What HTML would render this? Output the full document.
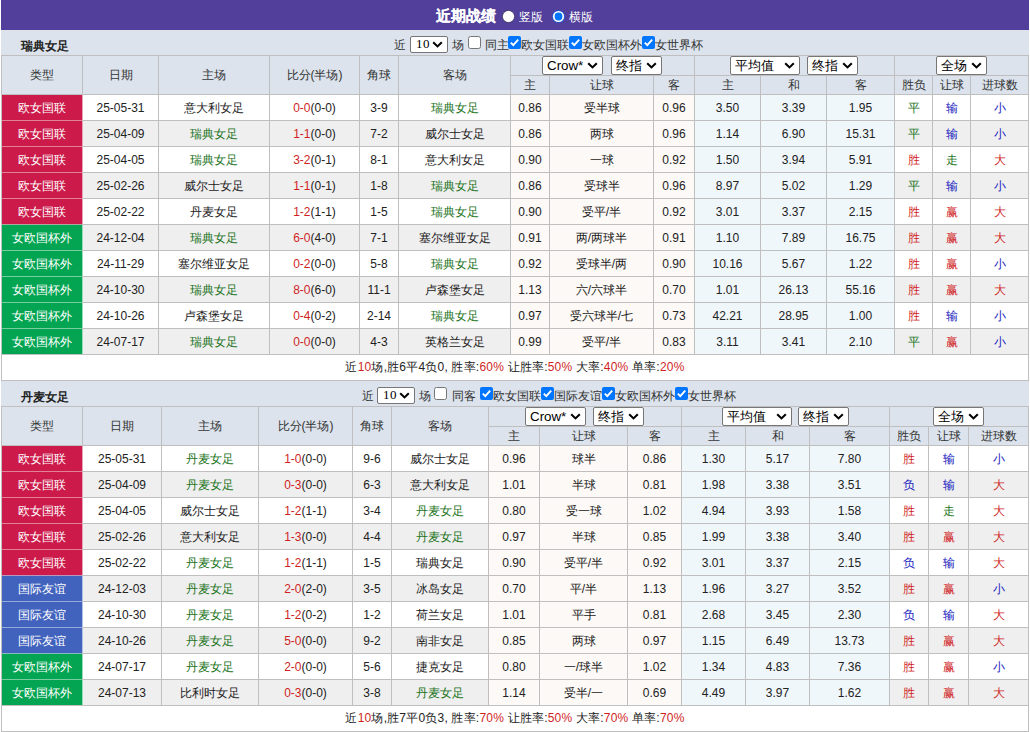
<!DOCTYPE html>
<html><head><meta charset="utf-8"><style>
html,body{margin:0;padding:0;background:#fff;width:1030px;height:732px;overflow:hidden}
body{position:relative;font-family:"Liberation Sans",sans-serif;font-size:12px;color:#333}
body>div{position:absolute;box-sizing:border-box}
.t{white-space:nowrap}
.c{text-align:center;white-space:nowrap;font-size:12px;color:#222;overflow:visible}
.h{color:#333}
.sel{background:#fff;border:1px solid #767676;border-radius:2px;box-sizing:content-box!important;color:#000;white-space:nowrap}
.sel .st{position:absolute;left:4px;top:0}
.sel .chev{position:absolute;right:4px;top:50%;margin-top:-4px}
</style></head><body>
<div style="left:1px;top:0px;width:1028px;height:30px;background:#523f9b"></div>
<div style="left:1px;top:30px;width:1028px;height:1px;background:#e6e6f8"></div>
<div class="t" style="left:436px;top:7px;font-size:15px;font-weight:bold;color:#fff;line-height:17px;-webkit-text-stroke:0.12px #fff">近期战绩</div>
<div style="left:501px;top:9px;width:15px;height:15px"><svg width="15" height="15" viewBox="0 0 15 15"><circle cx="7.5" cy="7.5" r="6.1" fill="#fff" stroke="#3c3560" stroke-width="0.9"/></svg></div>
<div class="t" style="left:519px;top:9px;font-size:12px;color:#fff;line-height:16px">竖版</div>
<div style="left:551px;top:9px;width:15px;height:15px"><svg width="15" height="15" viewBox="0 0 15 15"><circle cx="7.5" cy="7.5" r="6.6" fill="#2a55c8"/><circle cx="7.5" cy="7.5" r="5.6" fill="#fff"/><circle cx="7.5" cy="7.5" r="3.9" fill="#0075ff"/></svg></div>
<div class="t" style="left:569px;top:9px;font-size:12px;color:#fff;line-height:16px">横版</div>
<div style="left:1px;top:30px;width:1028px;height:25px;background:#dce3ec"></div>
<div class="t" style="left:21px;top:38px;font-size:12px;font-weight:bold;color:#222;line-height:16px">瑞典女足</div>
<div style="left:1px;top:55px;width:1028px;height:40px;background:#dce3ec"></div>
<div style="left:1px;top:95px;width:1028px;height:25px;background:#fff"></div>
<div style="left:1px;top:121px;width:1028px;height:25px;background:#efefef"></div>
<div style="left:1px;top:147px;width:1028px;height:25px;background:#fff"></div>
<div style="left:1px;top:173px;width:1028px;height:25px;background:#efefef"></div>
<div style="left:1px;top:199px;width:1028px;height:25px;background:#fff"></div>
<div style="left:1px;top:225px;width:1028px;height:25px;background:#efefef"></div>
<div style="left:1px;top:251px;width:1028px;height:25px;background:#fff"></div>
<div style="left:1px;top:277px;width:1028px;height:25px;background:#efefef"></div>
<div style="left:1px;top:303px;width:1028px;height:25px;background:#fff"></div>
<div style="left:1px;top:329px;width:1028px;height:25px;background:#efefef"></div>
<div style="left:1px;top:355px;width:1028px;height:25px;background:#fff"></div>
<div style="left:511px;top:95px;width:183px;height:25px;background:#fdf9f6"></div>
<div style="left:695px;top:95px;width:199px;height:25px;background:#f0f7fb"></div>
<div style="left:511px;top:121px;width:183px;height:25px;background:#fdf9f6"></div>
<div style="left:695px;top:121px;width:199px;height:25px;background:#f0f7fb"></div>
<div style="left:511px;top:147px;width:183px;height:25px;background:#fdf9f6"></div>
<div style="left:695px;top:147px;width:199px;height:25px;background:#f0f7fb"></div>
<div style="left:511px;top:173px;width:183px;height:25px;background:#fdf9f6"></div>
<div style="left:695px;top:173px;width:199px;height:25px;background:#f0f7fb"></div>
<div style="left:511px;top:199px;width:183px;height:25px;background:#fdf9f6"></div>
<div style="left:695px;top:199px;width:199px;height:25px;background:#f0f7fb"></div>
<div style="left:511px;top:225px;width:183px;height:25px;background:#fdf9f6"></div>
<div style="left:695px;top:225px;width:199px;height:25px;background:#f0f7fb"></div>
<div style="left:511px;top:251px;width:183px;height:25px;background:#fdf9f6"></div>
<div style="left:695px;top:251px;width:199px;height:25px;background:#f0f7fb"></div>
<div style="left:511px;top:277px;width:183px;height:25px;background:#fdf9f6"></div>
<div style="left:695px;top:277px;width:199px;height:25px;background:#f0f7fb"></div>
<div style="left:511px;top:303px;width:183px;height:25px;background:#fdf9f6"></div>
<div style="left:695px;top:303px;width:199px;height:25px;background:#f0f7fb"></div>
<div style="left:511px;top:329px;width:183px;height:25px;background:#fdf9f6"></div>
<div style="left:695px;top:329px;width:199px;height:25px;background:#f0f7fb"></div>
<div style="left:2px;top:95px;width:80px;height:25px;background:#cc1a4a"></div>
<div style="left:2px;top:121px;width:80px;height:25px;background:#cc1a4a"></div>
<div style="left:2px;top:147px;width:80px;height:25px;background:#cc1a4a"></div>
<div style="left:2px;top:173px;width:80px;height:25px;background:#cc1a4a"></div>
<div style="left:2px;top:199px;width:80px;height:25px;background:#cc1a4a"></div>
<div style="left:2px;top:225px;width:80px;height:25px;background:#04a552"></div>
<div style="left:2px;top:251px;width:80px;height:25px;background:#04a552"></div>
<div style="left:2px;top:277px;width:80px;height:25px;background:#04a552"></div>
<div style="left:2px;top:303px;width:80px;height:25px;background:#04a552"></div>
<div style="left:2px;top:329px;width:80px;height:25px;background:#04a552"></div>
<div style="left:1px;top:55px;width:1028px;height:1px;background:#bfbfbf"></div>
<div style="left:510px;top:75px;width:519px;height:1px;background:#bfbfbf"></div>
<div style="left:1px;top:94px;width:1028px;height:1px;background:#bfbfbf"></div>
<div style="left:1px;top:120px;width:1028px;height:1px;background:#bfbfbf"></div>
<div style="left:1px;top:146px;width:1028px;height:1px;background:#bfbfbf"></div>
<div style="left:1px;top:172px;width:1028px;height:1px;background:#bfbfbf"></div>
<div style="left:1px;top:198px;width:1028px;height:1px;background:#bfbfbf"></div>
<div style="left:1px;top:224px;width:1028px;height:1px;background:#bfbfbf"></div>
<div style="left:1px;top:250px;width:1028px;height:1px;background:#bfbfbf"></div>
<div style="left:1px;top:276px;width:1028px;height:1px;background:#bfbfbf"></div>
<div style="left:1px;top:302px;width:1028px;height:1px;background:#bfbfbf"></div>
<div style="left:1px;top:328px;width:1028px;height:1px;background:#bfbfbf"></div>
<div style="left:1px;top:354px;width:1028px;height:1px;background:#bfbfbf"></div>
<div style="left:1px;top:380px;width:1028px;height:1px;background:#bfbfbf"></div>
<div style="left:2px;top:120px;width:80px;height:1px;background:#e3819b"></div>
<div style="left:2px;top:146px;width:80px;height:1px;background:#e3819b"></div>
<div style="left:2px;top:172px;width:80px;height:1px;background:#e3819b"></div>
<div style="left:2px;top:198px;width:80px;height:1px;background:#e3819b"></div>
<div style="left:2px;top:224px;width:80px;height:1px;background:#aca89e"></div>
<div style="left:2px;top:250px;width:80px;height:1px;background:#75cea0"></div>
<div style="left:2px;top:276px;width:80px;height:1px;background:#75cea0"></div>
<div style="left:2px;top:302px;width:80px;height:1px;background:#75cea0"></div>
<div style="left:2px;top:328px;width:80px;height:1px;background:#75cea0"></div>
<div style="left:1px;top:55px;width:1px;height:326px;background:#bfbfbf"></div>
<div style="left:1028px;top:55px;width:1px;height:326px;background:#bfbfbf"></div>
<div style="left:82px;top:55px;width:1px;height:300px;background:#bfbfbf"></div>
<div style="left:158px;top:55px;width:1px;height:300px;background:#bfbfbf"></div>
<div style="left:269px;top:55px;width:1px;height:300px;background:#bfbfbf"></div>
<div style="left:359px;top:55px;width:1px;height:300px;background:#bfbfbf"></div>
<div style="left:398px;top:55px;width:1px;height:300px;background:#bfbfbf"></div>
<div style="left:510px;top:55px;width:1px;height:300px;background:#bfbfbf"></div>
<div style="left:694px;top:55px;width:1px;height:300px;background:#bfbfbf"></div>
<div style="left:894px;top:55px;width:1px;height:300px;background:#bfbfbf"></div>
<div style="left:549px;top:75px;width:1px;height:280px;background:#bfbfbf"></div>
<div style="left:653px;top:75px;width:1px;height:280px;background:#bfbfbf"></div>
<div style="left:760px;top:75px;width:1px;height:280px;background:#bfbfbf"></div>
<div style="left:826px;top:75px;width:1px;height:280px;background:#bfbfbf"></div>
<div style="left:932px;top:75px;width:1px;height:280px;background:#bfbfbf"></div>
<div style="left:970px;top:75px;width:1px;height:280px;background:#bfbfbf"></div>
<div style="left:82px;top:95px;width:1px;height:25px;background:#eba3b7"></div>
<div style="left:82px;top:121px;width:1px;height:25px;background:#eba3b7"></div>
<div style="left:82px;top:147px;width:1px;height:25px;background:#eba3b7"></div>
<div style="left:82px;top:173px;width:1px;height:25px;background:#eba3b7"></div>
<div style="left:82px;top:199px;width:1px;height:25px;background:#eba3b7"></div>
<div style="left:82px;top:225px;width:1px;height:25px;background:#9bdbba"></div>
<div style="left:82px;top:251px;width:1px;height:25px;background:#9bdbba"></div>
<div style="left:82px;top:277px;width:1px;height:25px;background:#9bdbba"></div>
<div style="left:82px;top:303px;width:1px;height:25px;background:#9bdbba"></div>
<div style="left:82px;top:329px;width:1px;height:25px;background:#9bdbba"></div>
<div class="c h" style="left:2px;top:56px;width:80px;height:38px;line-height:38px">类型</div>
<div class="c h" style="left:83px;top:56px;width:75px;height:38px;line-height:38px">日期</div>
<div class="c h" style="left:159px;top:56px;width:110px;height:38px;line-height:38px">主场</div>
<div class="c h" style="left:270px;top:56px;width:89px;height:38px;line-height:38px">比分(半场)</div>
<div class="c h" style="left:360px;top:56px;width:38px;height:38px;line-height:38px">角球</div>
<div class="c h" style="left:399px;top:56px;width:111px;height:38px;line-height:38px">客场</div>
<div class="c h" style="left:511px;top:76px;width:38px;height:18px;line-height:18px">主</div>
<div class="c h" style="left:550px;top:76px;width:103px;height:18px;line-height:18px">让球</div>
<div class="c h" style="left:654px;top:76px;width:40px;height:18px;line-height:18px">客</div>
<div class="c h" style="left:695px;top:76px;width:65px;height:18px;line-height:18px">主</div>
<div class="c h" style="left:761px;top:76px;width:65px;height:18px;line-height:18px">和</div>
<div class="c h" style="left:827px;top:76px;width:67px;height:18px;line-height:18px">客</div>
<div class="c h" style="left:895px;top:76px;width:37px;height:18px;line-height:18px">胜负</div>
<div class="c h" style="left:933px;top:76px;width:37px;height:18px;line-height:18px">让球</div>
<div class="c h" style="left:971px;top:76px;width:57px;height:18px;line-height:18px">进球数</div>
<div class="sel" style="left:542px;top:56px;width:59px;height:17px;font-size:13.333px;line-height:17px"><span class="st">Crow*</span><svg class="chev" width="11" height="7" viewBox="0 0 11 7"><path d="M1.2 1.3 L5.5 5.4 L9.8 1.3" fill="none" stroke="#000" stroke-width="2.1"/></svg></div>
<div class="sel" style="left:611px;top:56px;width:49px;height:17px;font-size:13.333px;line-height:17px"><span class="st">终指</span><svg class="chev" width="11" height="7" viewBox="0 0 11 7"><path d="M1.2 1.3 L5.5 5.4 L9.8 1.3" fill="none" stroke="#000" stroke-width="2.1"/></svg></div>
<div class="sel" style="left:730px;top:56px;width:68px;height:17px;font-size:13.333px;line-height:17px"><span class="st">平均值</span><svg class="chev" width="11" height="7" viewBox="0 0 11 7"><path d="M1.2 1.3 L5.5 5.4 L9.8 1.3" fill="none" stroke="#000" stroke-width="2.1"/></svg></div>
<div class="sel" style="left:807px;top:56px;width:49px;height:17px;font-size:13.333px;line-height:17px"><span class="st">终指</span><svg class="chev" width="11" height="7" viewBox="0 0 11 7"><path d="M1.2 1.3 L5.5 5.4 L9.8 1.3" fill="none" stroke="#000" stroke-width="2.1"/></svg></div>
<div class="sel" style="left:936px;top:56px;width:49px;height:17px;font-size:13.333px;line-height:17px"><span class="st">全场</span><svg class="chev" width="11" height="7" viewBox="0 0 11 7"><path d="M1.2 1.3 L5.5 5.4 L9.8 1.3" fill="none" stroke="#000" stroke-width="2.1"/></svg></div>
<div class="c" style="left:2px;top:96px;width:80px;height:25px;line-height:25px"><span style="color:#fff">欧女国联</span></div>
<div class="c" style="left:83px;top:96px;width:75px;height:25px;line-height:25px">25-05-31</div>
<div class="c" style="left:159px;top:96px;width:110px;height:25px;line-height:25px">意大利女足</div>
<div class="c" style="left:270px;top:96px;width:89px;height:25px;line-height:25px"><span style="color:#cf1f1f">0-0</span>(0-0)</div>
<div class="c" style="left:360px;top:96px;width:38px;height:25px;line-height:25px">3-9</div>
<div class="c" style="left:399px;top:96px;width:111px;height:25px;line-height:25px"><span style="color:#1c741c">瑞典女足</span></div>
<div class="c" style="left:511px;top:96px;width:38px;height:25px;line-height:25px">0.86</div>
<div class="c" style="left:550px;top:96px;width:103px;height:25px;line-height:25px">受半球</div>
<div class="c" style="left:654px;top:96px;width:40px;height:25px;line-height:25px">0.96</div>
<div class="c" style="left:695px;top:96px;width:65px;height:25px;line-height:25px">3.50</div>
<div class="c" style="left:761px;top:96px;width:65px;height:25px;line-height:25px">3.39</div>
<div class="c" style="left:827px;top:96px;width:67px;height:25px;line-height:25px">1.95</div>
<div class="c" style="left:895px;top:96px;width:37px;height:25px;line-height:25px"><span style="color:#1c741c">平</span></div>
<div class="c" style="left:933px;top:96px;width:37px;height:25px;line-height:25px"><span style="color:#1822c0">输</span></div>
<div class="c" style="left:971px;top:96px;width:57px;height:25px;line-height:25px"><span style="color:#1822c0">小</span></div>
<div class="c" style="left:2px;top:122px;width:80px;height:25px;line-height:25px"><span style="color:#fff">欧女国联</span></div>
<div class="c" style="left:83px;top:122px;width:75px;height:25px;line-height:25px">25-04-09</div>
<div class="c" style="left:159px;top:122px;width:110px;height:25px;line-height:25px"><span style="color:#1c741c">瑞典女足</span></div>
<div class="c" style="left:270px;top:122px;width:89px;height:25px;line-height:25px"><span style="color:#cf1f1f">1-1</span>(0-0)</div>
<div class="c" style="left:360px;top:122px;width:38px;height:25px;line-height:25px">7-2</div>
<div class="c" style="left:399px;top:122px;width:111px;height:25px;line-height:25px">威尔士女足</div>
<div class="c" style="left:511px;top:122px;width:38px;height:25px;line-height:25px">0.86</div>
<div class="c" style="left:550px;top:122px;width:103px;height:25px;line-height:25px">两球</div>
<div class="c" style="left:654px;top:122px;width:40px;height:25px;line-height:25px">0.96</div>
<div class="c" style="left:695px;top:122px;width:65px;height:25px;line-height:25px">1.14</div>
<div class="c" style="left:761px;top:122px;width:65px;height:25px;line-height:25px">6.90</div>
<div class="c" style="left:827px;top:122px;width:67px;height:25px;line-height:25px">15.31</div>
<div class="c" style="left:895px;top:122px;width:37px;height:25px;line-height:25px"><span style="color:#1c741c">平</span></div>
<div class="c" style="left:933px;top:122px;width:37px;height:25px;line-height:25px"><span style="color:#1822c0">输</span></div>
<div class="c" style="left:971px;top:122px;width:57px;height:25px;line-height:25px"><span style="color:#1822c0">小</span></div>
<div class="c" style="left:2px;top:148px;width:80px;height:25px;line-height:25px"><span style="color:#fff">欧女国联</span></div>
<div class="c" style="left:83px;top:148px;width:75px;height:25px;line-height:25px">25-04-05</div>
<div class="c" style="left:159px;top:148px;width:110px;height:25px;line-height:25px"><span style="color:#1c741c">瑞典女足</span></div>
<div class="c" style="left:270px;top:148px;width:89px;height:25px;line-height:25px"><span style="color:#cf1f1f">3-2</span>(0-1)</div>
<div class="c" style="left:360px;top:148px;width:38px;height:25px;line-height:25px">8-1</div>
<div class="c" style="left:399px;top:148px;width:111px;height:25px;line-height:25px">意大利女足</div>
<div class="c" style="left:511px;top:148px;width:38px;height:25px;line-height:25px">0.90</div>
<div class="c" style="left:550px;top:148px;width:103px;height:25px;line-height:25px">一球</div>
<div class="c" style="left:654px;top:148px;width:40px;height:25px;line-height:25px">0.92</div>
<div class="c" style="left:695px;top:148px;width:65px;height:25px;line-height:25px">1.50</div>
<div class="c" style="left:761px;top:148px;width:65px;height:25px;line-height:25px">3.94</div>
<div class="c" style="left:827px;top:148px;width:67px;height:25px;line-height:25px">5.91</div>
<div class="c" style="left:895px;top:148px;width:37px;height:25px;line-height:25px"><span style="color:#cf1f1f">胜</span></div>
<div class="c" style="left:933px;top:148px;width:37px;height:25px;line-height:25px"><span style="color:#1c741c">走</span></div>
<div class="c" style="left:971px;top:148px;width:57px;height:25px;line-height:25px"><span style="color:#cf1f1f">大</span></div>
<div class="c" style="left:2px;top:174px;width:80px;height:25px;line-height:25px"><span style="color:#fff">欧女国联</span></div>
<div class="c" style="left:83px;top:174px;width:75px;height:25px;line-height:25px">25-02-26</div>
<div class="c" style="left:159px;top:174px;width:110px;height:25px;line-height:25px">威尔士女足</div>
<div class="c" style="left:270px;top:174px;width:89px;height:25px;line-height:25px"><span style="color:#cf1f1f">1-1</span>(0-1)</div>
<div class="c" style="left:360px;top:174px;width:38px;height:25px;line-height:25px">1-8</div>
<div class="c" style="left:399px;top:174px;width:111px;height:25px;line-height:25px"><span style="color:#1c741c">瑞典女足</span></div>
<div class="c" style="left:511px;top:174px;width:38px;height:25px;line-height:25px">0.86</div>
<div class="c" style="left:550px;top:174px;width:103px;height:25px;line-height:25px">受球半</div>
<div class="c" style="left:654px;top:174px;width:40px;height:25px;line-height:25px">0.96</div>
<div class="c" style="left:695px;top:174px;width:65px;height:25px;line-height:25px">8.97</div>
<div class="c" style="left:761px;top:174px;width:65px;height:25px;line-height:25px">5.02</div>
<div class="c" style="left:827px;top:174px;width:67px;height:25px;line-height:25px">1.29</div>
<div class="c" style="left:895px;top:174px;width:37px;height:25px;line-height:25px"><span style="color:#1c741c">平</span></div>
<div class="c" style="left:933px;top:174px;width:37px;height:25px;line-height:25px"><span style="color:#1822c0">输</span></div>
<div class="c" style="left:971px;top:174px;width:57px;height:25px;line-height:25px"><span style="color:#1822c0">小</span></div>
<div class="c" style="left:2px;top:200px;width:80px;height:25px;line-height:25px"><span style="color:#fff">欧女国联</span></div>
<div class="c" style="left:83px;top:200px;width:75px;height:25px;line-height:25px">25-02-22</div>
<div class="c" style="left:159px;top:200px;width:110px;height:25px;line-height:25px">丹麦女足</div>
<div class="c" style="left:270px;top:200px;width:89px;height:25px;line-height:25px"><span style="color:#cf1f1f">1-2</span>(1-1)</div>
<div class="c" style="left:360px;top:200px;width:38px;height:25px;line-height:25px">1-5</div>
<div class="c" style="left:399px;top:200px;width:111px;height:25px;line-height:25px"><span style="color:#1c741c">瑞典女足</span></div>
<div class="c" style="left:511px;top:200px;width:38px;height:25px;line-height:25px">0.90</div>
<div class="c" style="left:550px;top:200px;width:103px;height:25px;line-height:25px">受平/半</div>
<div class="c" style="left:654px;top:200px;width:40px;height:25px;line-height:25px">0.92</div>
<div class="c" style="left:695px;top:200px;width:65px;height:25px;line-height:25px">3.01</div>
<div class="c" style="left:761px;top:200px;width:65px;height:25px;line-height:25px">3.37</div>
<div class="c" style="left:827px;top:200px;width:67px;height:25px;line-height:25px">2.15</div>
<div class="c" style="left:895px;top:200px;width:37px;height:25px;line-height:25px"><span style="color:#cf1f1f">胜</span></div>
<div class="c" style="left:933px;top:200px;width:37px;height:25px;line-height:25px"><span style="color:#cf1f1f">赢</span></div>
<div class="c" style="left:971px;top:200px;width:57px;height:25px;line-height:25px"><span style="color:#cf1f1f">大</span></div>
<div class="c" style="left:2px;top:226px;width:80px;height:25px;line-height:25px"><span style="color:#fff">女欧国杯外</span></div>
<div class="c" style="left:83px;top:226px;width:75px;height:25px;line-height:25px">24-12-04</div>
<div class="c" style="left:159px;top:226px;width:110px;height:25px;line-height:25px"><span style="color:#1c741c">瑞典女足</span></div>
<div class="c" style="left:270px;top:226px;width:89px;height:25px;line-height:25px"><span style="color:#cf1f1f">6-0</span>(4-0)</div>
<div class="c" style="left:360px;top:226px;width:38px;height:25px;line-height:25px">7-1</div>
<div class="c" style="left:399px;top:226px;width:111px;height:25px;line-height:25px">塞尔维亚女足</div>
<div class="c" style="left:511px;top:226px;width:38px;height:25px;line-height:25px">0.91</div>
<div class="c" style="left:550px;top:226px;width:103px;height:25px;line-height:25px">两/两球半</div>
<div class="c" style="left:654px;top:226px;width:40px;height:25px;line-height:25px">0.91</div>
<div class="c" style="left:695px;top:226px;width:65px;height:25px;line-height:25px">1.10</div>
<div class="c" style="left:761px;top:226px;width:65px;height:25px;line-height:25px">7.89</div>
<div class="c" style="left:827px;top:226px;width:67px;height:25px;line-height:25px">16.75</div>
<div class="c" style="left:895px;top:226px;width:37px;height:25px;line-height:25px"><span style="color:#cf1f1f">胜</span></div>
<div class="c" style="left:933px;top:226px;width:37px;height:25px;line-height:25px"><span style="color:#cf1f1f">赢</span></div>
<div class="c" style="left:971px;top:226px;width:57px;height:25px;line-height:25px"><span style="color:#cf1f1f">大</span></div>
<div class="c" style="left:2px;top:252px;width:80px;height:25px;line-height:25px"><span style="color:#fff">女欧国杯外</span></div>
<div class="c" style="left:83px;top:252px;width:75px;height:25px;line-height:25px">24-11-29</div>
<div class="c" style="left:159px;top:252px;width:110px;height:25px;line-height:25px">塞尔维亚女足</div>
<div class="c" style="left:270px;top:252px;width:89px;height:25px;line-height:25px"><span style="color:#cf1f1f">0-2</span>(0-0)</div>
<div class="c" style="left:360px;top:252px;width:38px;height:25px;line-height:25px">5-8</div>
<div class="c" style="left:399px;top:252px;width:111px;height:25px;line-height:25px"><span style="color:#1c741c">瑞典女足</span></div>
<div class="c" style="left:511px;top:252px;width:38px;height:25px;line-height:25px">0.92</div>
<div class="c" style="left:550px;top:252px;width:103px;height:25px;line-height:25px">受球半/两</div>
<div class="c" style="left:654px;top:252px;width:40px;height:25px;line-height:25px">0.90</div>
<div class="c" style="left:695px;top:252px;width:65px;height:25px;line-height:25px">10.16</div>
<div class="c" style="left:761px;top:252px;width:65px;height:25px;line-height:25px">5.67</div>
<div class="c" style="left:827px;top:252px;width:67px;height:25px;line-height:25px">1.22</div>
<div class="c" style="left:895px;top:252px;width:37px;height:25px;line-height:25px"><span style="color:#cf1f1f">胜</span></div>
<div class="c" style="left:933px;top:252px;width:37px;height:25px;line-height:25px"><span style="color:#cf1f1f">赢</span></div>
<div class="c" style="left:971px;top:252px;width:57px;height:25px;line-height:25px"><span style="color:#1822c0">小</span></div>
<div class="c" style="left:2px;top:278px;width:80px;height:25px;line-height:25px"><span style="color:#fff">女欧国杯外</span></div>
<div class="c" style="left:83px;top:278px;width:75px;height:25px;line-height:25px">24-10-30</div>
<div class="c" style="left:159px;top:278px;width:110px;height:25px;line-height:25px"><span style="color:#1c741c">瑞典女足</span></div>
<div class="c" style="left:270px;top:278px;width:89px;height:25px;line-height:25px"><span style="color:#cf1f1f">8-0</span>(6-0)</div>
<div class="c" style="left:360px;top:278px;width:38px;height:25px;line-height:25px">11-1</div>
<div class="c" style="left:399px;top:278px;width:111px;height:25px;line-height:25px">卢森堡女足</div>
<div class="c" style="left:511px;top:278px;width:38px;height:25px;line-height:25px">1.13</div>
<div class="c" style="left:550px;top:278px;width:103px;height:25px;line-height:25px">六/六球半</div>
<div class="c" style="left:654px;top:278px;width:40px;height:25px;line-height:25px">0.70</div>
<div class="c" style="left:695px;top:278px;width:65px;height:25px;line-height:25px">1.01</div>
<div class="c" style="left:761px;top:278px;width:65px;height:25px;line-height:25px">26.13</div>
<div class="c" style="left:827px;top:278px;width:67px;height:25px;line-height:25px">55.16</div>
<div class="c" style="left:895px;top:278px;width:37px;height:25px;line-height:25px"><span style="color:#cf1f1f">胜</span></div>
<div class="c" style="left:933px;top:278px;width:37px;height:25px;line-height:25px"><span style="color:#cf1f1f">赢</span></div>
<div class="c" style="left:971px;top:278px;width:57px;height:25px;line-height:25px"><span style="color:#cf1f1f">大</span></div>
<div class="c" style="left:2px;top:304px;width:80px;height:25px;line-height:25px"><span style="color:#fff">女欧国杯外</span></div>
<div class="c" style="left:83px;top:304px;width:75px;height:25px;line-height:25px">24-10-26</div>
<div class="c" style="left:159px;top:304px;width:110px;height:25px;line-height:25px">卢森堡女足</div>
<div class="c" style="left:270px;top:304px;width:89px;height:25px;line-height:25px"><span style="color:#cf1f1f">0-4</span>(0-2)</div>
<div class="c" style="left:360px;top:304px;width:38px;height:25px;line-height:25px">2-14</div>
<div class="c" style="left:399px;top:304px;width:111px;height:25px;line-height:25px"><span style="color:#1c741c">瑞典女足</span></div>
<div class="c" style="left:511px;top:304px;width:38px;height:25px;line-height:25px">0.97</div>
<div class="c" style="left:550px;top:304px;width:103px;height:25px;line-height:25px">受六球半/七</div>
<div class="c" style="left:654px;top:304px;width:40px;height:25px;line-height:25px">0.73</div>
<div class="c" style="left:695px;top:304px;width:65px;height:25px;line-height:25px">42.21</div>
<div class="c" style="left:761px;top:304px;width:65px;height:25px;line-height:25px">28.95</div>
<div class="c" style="left:827px;top:304px;width:67px;height:25px;line-height:25px">1.00</div>
<div class="c" style="left:895px;top:304px;width:37px;height:25px;line-height:25px"><span style="color:#cf1f1f">胜</span></div>
<div class="c" style="left:933px;top:304px;width:37px;height:25px;line-height:25px"><span style="color:#1822c0">输</span></div>
<div class="c" style="left:971px;top:304px;width:57px;height:25px;line-height:25px"><span style="color:#1822c0">小</span></div>
<div class="c" style="left:2px;top:330px;width:80px;height:25px;line-height:25px"><span style="color:#fff">女欧国杯外</span></div>
<div class="c" style="left:83px;top:330px;width:75px;height:25px;line-height:25px">24-07-17</div>
<div class="c" style="left:159px;top:330px;width:110px;height:25px;line-height:25px"><span style="color:#1c741c">瑞典女足</span></div>
<div class="c" style="left:270px;top:330px;width:89px;height:25px;line-height:25px"><span style="color:#cf1f1f">0-0</span>(0-0)</div>
<div class="c" style="left:360px;top:330px;width:38px;height:25px;line-height:25px">4-3</div>
<div class="c" style="left:399px;top:330px;width:111px;height:25px;line-height:25px">英格兰女足</div>
<div class="c" style="left:511px;top:330px;width:38px;height:25px;line-height:25px">0.99</div>
<div class="c" style="left:550px;top:330px;width:103px;height:25px;line-height:25px">受平/半</div>
<div class="c" style="left:654px;top:330px;width:40px;height:25px;line-height:25px">0.83</div>
<div class="c" style="left:695px;top:330px;width:65px;height:25px;line-height:25px">3.11</div>
<div class="c" style="left:761px;top:330px;width:65px;height:25px;line-height:25px">3.41</div>
<div class="c" style="left:827px;top:330px;width:67px;height:25px;line-height:25px">2.10</div>
<div class="c" style="left:895px;top:330px;width:37px;height:25px;line-height:25px"><span style="color:#1c741c">平</span></div>
<div class="c" style="left:933px;top:330px;width:37px;height:25px;line-height:25px"><span style="color:#cf1f1f">赢</span></div>
<div class="c" style="left:971px;top:330px;width:57px;height:25px;line-height:25px"><span style="color:#1822c0">小</span></div>
<div class="c" style="left:2px;top:355px;width:1026px;height:25px;line-height:25px;letter-spacing:0.2px">近<span style="color:#cf1f1f">10</span>场,胜6平4负0, 胜率:<span style="color:#cf1f1f">60%</span> 让胜率:<span style="color:#cf1f1f">50%</span> 大率:<span style="color:#cf1f1f">40%</span> 单率:<span style="color:#cf1f1f">20%</span></div>
<div class="t" style="left:394px;top:37px;font-size:12px;color:#333;line-height:16px">近</div>
<div class="sel r" style="left:410px;top:36px;width:36px;height:15px;font-size:13.333px;line-height:15px"><span class="st" style="font-family:Liberation Serif,serif;font-size:13px;left:5px;top:-1px;letter-spacing:0.5px">10</span><svg class="chev" width="11" height="7" viewBox="0 0 11 7"><path d="M1.2 1.3 L5.5 5.4 L9.8 1.3" fill="none" stroke="#000" stroke-width="2.1"/></svg></div>
<div class="t" style="left:452px;top:37px;font-size:12px;color:#333;line-height:16px">场</div>
<div style="left:468px;top:36px;width:13px;height:13px"><svg width="13" height="13" viewBox="0 0 13 13"><rect x="0.5" y="0.5" width="12" height="12" rx="2" fill="#fff" stroke="#767676" stroke-width="1"/></svg></div>
<div class="t" style="left:485px;top:37px;font-size:12px;color:#333;line-height:16px">同主</div>
<div style="left:508px;top:36px;width:13px;height:13px"><svg width="13" height="13" viewBox="0 0 13 13"><rect x="0" y="0" width="13" height="13" rx="2" fill="#0075ff"/><path d="M2.8 6.6 L5.3 9.1 L10.2 3.6" fill="none" stroke="#fff" stroke-width="1.9"/></svg></div>
<div class="t" style="left:521px;top:37px;font-size:12px;color:#333;line-height:16px">欧女国联</div>
<div style="left:569px;top:36px;width:13px;height:13px"><svg width="13" height="13" viewBox="0 0 13 13"><rect x="0" y="0" width="13" height="13" rx="2" fill="#0075ff"/><path d="M2.8 6.6 L5.3 9.1 L10.2 3.6" fill="none" stroke="#fff" stroke-width="1.9"/></svg></div>
<div class="t" style="left:582px;top:37px;font-size:12px;color:#333;line-height:16px">女欧国杯外</div>
<div style="left:642px;top:36px;width:13px;height:13px"><svg width="13" height="13" viewBox="0 0 13 13"><rect x="0" y="0" width="13" height="13" rx="2" fill="#0075ff"/><path d="M2.8 6.6 L5.3 9.1 L10.2 3.6" fill="none" stroke="#fff" stroke-width="1.9"/></svg></div>
<div class="t" style="left:655px;top:37px;font-size:12px;color:#333;line-height:16px">女世界杯</div>
<div style="left:1px;top:381px;width:1028px;height:25px;background:#dce3ec"></div>
<div class="t" style="left:21px;top:389px;font-size:12px;font-weight:bold;color:#222;line-height:16px">丹麦女足</div>
<div style="left:1px;top:406px;width:1028px;height:40px;background:#dce3ec"></div>
<div style="left:1px;top:446px;width:1028px;height:25px;background:#fff"></div>
<div style="left:1px;top:472px;width:1028px;height:25px;background:#efefef"></div>
<div style="left:1px;top:498px;width:1028px;height:25px;background:#fff"></div>
<div style="left:1px;top:524px;width:1028px;height:25px;background:#efefef"></div>
<div style="left:1px;top:550px;width:1028px;height:25px;background:#fff"></div>
<div style="left:1px;top:576px;width:1028px;height:25px;background:#efefef"></div>
<div style="left:1px;top:602px;width:1028px;height:25px;background:#fff"></div>
<div style="left:1px;top:628px;width:1028px;height:25px;background:#efefef"></div>
<div style="left:1px;top:654px;width:1028px;height:25px;background:#fff"></div>
<div style="left:1px;top:680px;width:1028px;height:25px;background:#efefef"></div>
<div style="left:1px;top:706px;width:1028px;height:25px;background:#fff"></div>
<div style="left:489px;top:446px;width:192px;height:25px;background:#fdf9f6"></div>
<div style="left:682px;top:446px;width:207px;height:25px;background:#f0f7fb"></div>
<div style="left:489px;top:472px;width:192px;height:25px;background:#fdf9f6"></div>
<div style="left:682px;top:472px;width:207px;height:25px;background:#f0f7fb"></div>
<div style="left:489px;top:498px;width:192px;height:25px;background:#fdf9f6"></div>
<div style="left:682px;top:498px;width:207px;height:25px;background:#f0f7fb"></div>
<div style="left:489px;top:524px;width:192px;height:25px;background:#fdf9f6"></div>
<div style="left:682px;top:524px;width:207px;height:25px;background:#f0f7fb"></div>
<div style="left:489px;top:550px;width:192px;height:25px;background:#fdf9f6"></div>
<div style="left:682px;top:550px;width:207px;height:25px;background:#f0f7fb"></div>
<div style="left:489px;top:576px;width:192px;height:25px;background:#fdf9f6"></div>
<div style="left:682px;top:576px;width:207px;height:25px;background:#f0f7fb"></div>
<div style="left:489px;top:602px;width:192px;height:25px;background:#fdf9f6"></div>
<div style="left:682px;top:602px;width:207px;height:25px;background:#f0f7fb"></div>
<div style="left:489px;top:628px;width:192px;height:25px;background:#fdf9f6"></div>
<div style="left:682px;top:628px;width:207px;height:25px;background:#f0f7fb"></div>
<div style="left:489px;top:654px;width:192px;height:25px;background:#fdf9f6"></div>
<div style="left:682px;top:654px;width:207px;height:25px;background:#f0f7fb"></div>
<div style="left:489px;top:680px;width:192px;height:25px;background:#fdf9f6"></div>
<div style="left:682px;top:680px;width:207px;height:25px;background:#f0f7fb"></div>
<div style="left:2px;top:446px;width:80px;height:25px;background:#cc1a4a"></div>
<div style="left:2px;top:472px;width:80px;height:25px;background:#cc1a4a"></div>
<div style="left:2px;top:498px;width:80px;height:25px;background:#cc1a4a"></div>
<div style="left:2px;top:524px;width:80px;height:25px;background:#cc1a4a"></div>
<div style="left:2px;top:550px;width:80px;height:25px;background:#cc1a4a"></div>
<div style="left:2px;top:576px;width:80px;height:25px;background:#4163bd"></div>
<div style="left:2px;top:602px;width:80px;height:25px;background:#4163bd"></div>
<div style="left:2px;top:628px;width:80px;height:25px;background:#4163bd"></div>
<div style="left:2px;top:654px;width:80px;height:25px;background:#04a552"></div>
<div style="left:2px;top:680px;width:80px;height:25px;background:#04a552"></div>
<div style="left:1px;top:406px;width:1028px;height:1px;background:#bfbfbf"></div>
<div style="left:488px;top:426px;width:541px;height:1px;background:#bfbfbf"></div>
<div style="left:1px;top:445px;width:1028px;height:1px;background:#bfbfbf"></div>
<div style="left:1px;top:471px;width:1028px;height:1px;background:#bfbfbf"></div>
<div style="left:1px;top:497px;width:1028px;height:1px;background:#bfbfbf"></div>
<div style="left:1px;top:523px;width:1028px;height:1px;background:#bfbfbf"></div>
<div style="left:1px;top:549px;width:1028px;height:1px;background:#bfbfbf"></div>
<div style="left:1px;top:575px;width:1028px;height:1px;background:#bfbfbf"></div>
<div style="left:1px;top:601px;width:1028px;height:1px;background:#bfbfbf"></div>
<div style="left:1px;top:627px;width:1028px;height:1px;background:#bfbfbf"></div>
<div style="left:1px;top:653px;width:1028px;height:1px;background:#bfbfbf"></div>
<div style="left:1px;top:679px;width:1028px;height:1px;background:#bfbfbf"></div>
<div style="left:1px;top:705px;width:1028px;height:1px;background:#bfbfbf"></div>
<div style="left:1px;top:731px;width:1028px;height:1px;background:#bfbfbf"></div>
<div style="left:2px;top:471px;width:80px;height:1px;background:#e3819b"></div>
<div style="left:2px;top:497px;width:80px;height:1px;background:#e3819b"></div>
<div style="left:2px;top:523px;width:80px;height:1px;background:#e3819b"></div>
<div style="left:2px;top:549px;width:80px;height:1px;background:#e3819b"></div>
<div style="left:2px;top:575px;width:80px;height:1px;background:#bc95bb"></div>
<div style="left:2px;top:601px;width:80px;height:1px;background:#96a9db"></div>
<div style="left:2px;top:627px;width:80px;height:1px;background:#96a9db"></div>
<div style="left:2px;top:653px;width:80px;height:1px;background:#85bbbe"></div>
<div style="left:2px;top:679px;width:80px;height:1px;background:#75cea0"></div>
<div style="left:1px;top:406px;width:1px;height:326px;background:#bfbfbf"></div>
<div style="left:1028px;top:406px;width:1px;height:326px;background:#bfbfbf"></div>
<div style="left:82px;top:406px;width:1px;height:300px;background:#bfbfbf"></div>
<div style="left:161px;top:406px;width:1px;height:300px;background:#bfbfbf"></div>
<div style="left:258px;top:406px;width:1px;height:300px;background:#bfbfbf"></div>
<div style="left:352px;top:406px;width:1px;height:300px;background:#bfbfbf"></div>
<div style="left:391px;top:406px;width:1px;height:300px;background:#bfbfbf"></div>
<div style="left:488px;top:406px;width:1px;height:300px;background:#bfbfbf"></div>
<div style="left:681px;top:406px;width:1px;height:300px;background:#bfbfbf"></div>
<div style="left:889px;top:406px;width:1px;height:300px;background:#bfbfbf"></div>
<div style="left:539px;top:426px;width:1px;height:280px;background:#bfbfbf"></div>
<div style="left:627px;top:426px;width:1px;height:280px;background:#bfbfbf"></div>
<div style="left:745px;top:426px;width:1px;height:280px;background:#bfbfbf"></div>
<div style="left:809px;top:426px;width:1px;height:280px;background:#bfbfbf"></div>
<div style="left:928px;top:426px;width:1px;height:280px;background:#bfbfbf"></div>
<div style="left:968px;top:426px;width:1px;height:280px;background:#bfbfbf"></div>
<div style="left:82px;top:446px;width:1px;height:25px;background:#eba3b7"></div>
<div style="left:82px;top:472px;width:1px;height:25px;background:#eba3b7"></div>
<div style="left:82px;top:498px;width:1px;height:25px;background:#eba3b7"></div>
<div style="left:82px;top:524px;width:1px;height:25px;background:#eba3b7"></div>
<div style="left:82px;top:550px;width:1px;height:25px;background:#eba3b7"></div>
<div style="left:82px;top:576px;width:1px;height:25px;background:#b3c1e5"></div>
<div style="left:82px;top:602px;width:1px;height:25px;background:#b3c1e5"></div>
<div style="left:82px;top:628px;width:1px;height:25px;background:#b3c1e5"></div>
<div style="left:82px;top:654px;width:1px;height:25px;background:#9bdbba"></div>
<div style="left:82px;top:680px;width:1px;height:25px;background:#9bdbba"></div>
<div class="c h" style="left:2px;top:407px;width:80px;height:38px;line-height:38px">类型</div>
<div class="c h" style="left:83px;top:407px;width:78px;height:38px;line-height:38px">日期</div>
<div class="c h" style="left:162px;top:407px;width:96px;height:38px;line-height:38px">主场</div>
<div class="c h" style="left:259px;top:407px;width:93px;height:38px;line-height:38px">比分(半场)</div>
<div class="c h" style="left:353px;top:407px;width:38px;height:38px;line-height:38px">角球</div>
<div class="c h" style="left:392px;top:407px;width:96px;height:38px;line-height:38px">客场</div>
<div class="c h" style="left:489px;top:427px;width:50px;height:18px;line-height:18px">主</div>
<div class="c h" style="left:540px;top:427px;width:87px;height:18px;line-height:18px">让球</div>
<div class="c h" style="left:628px;top:427px;width:53px;height:18px;line-height:18px">客</div>
<div class="c h" style="left:682px;top:427px;width:63px;height:18px;line-height:18px">主</div>
<div class="c h" style="left:746px;top:427px;width:63px;height:18px;line-height:18px">和</div>
<div class="c h" style="left:810px;top:427px;width:79px;height:18px;line-height:18px">客</div>
<div class="c h" style="left:890px;top:427px;width:38px;height:18px;line-height:18px">胜负</div>
<div class="c h" style="left:929px;top:427px;width:39px;height:18px;line-height:18px">让球</div>
<div class="c h" style="left:969px;top:427px;width:59px;height:18px;line-height:18px">进球数</div>
<div class="sel" style="left:525px;top:407px;width:59px;height:17px;font-size:13.333px;line-height:17px"><span class="st">Crow*</span><svg class="chev" width="11" height="7" viewBox="0 0 11 7"><path d="M1.2 1.3 L5.5 5.4 L9.8 1.3" fill="none" stroke="#000" stroke-width="2.1"/></svg></div>
<div class="sel" style="left:593px;top:407px;width:49px;height:17px;font-size:13.333px;line-height:17px"><span class="st">终指</span><svg class="chev" width="11" height="7" viewBox="0 0 11 7"><path d="M1.2 1.3 L5.5 5.4 L9.8 1.3" fill="none" stroke="#000" stroke-width="2.1"/></svg></div>
<div class="sel" style="left:722px;top:407px;width:68px;height:17px;font-size:13.333px;line-height:17px"><span class="st">平均值</span><svg class="chev" width="11" height="7" viewBox="0 0 11 7"><path d="M1.2 1.3 L5.5 5.4 L9.8 1.3" fill="none" stroke="#000" stroke-width="2.1"/></svg></div>
<div class="sel" style="left:798px;top:407px;width:49px;height:17px;font-size:13.333px;line-height:17px"><span class="st">终指</span><svg class="chev" width="11" height="7" viewBox="0 0 11 7"><path d="M1.2 1.3 L5.5 5.4 L9.8 1.3" fill="none" stroke="#000" stroke-width="2.1"/></svg></div>
<div class="sel" style="left:933px;top:407px;width:49px;height:17px;font-size:13.333px;line-height:17px"><span class="st">全场</span><svg class="chev" width="11" height="7" viewBox="0 0 11 7"><path d="M1.2 1.3 L5.5 5.4 L9.8 1.3" fill="none" stroke="#000" stroke-width="2.1"/></svg></div>
<div class="c" style="left:2px;top:447px;width:80px;height:25px;line-height:25px"><span style="color:#fff">欧女国联</span></div>
<div class="c" style="left:83px;top:447px;width:78px;height:25px;line-height:25px">25-05-31</div>
<div class="c" style="left:162px;top:447px;width:96px;height:25px;line-height:25px"><span style="color:#1c741c">丹麦女足</span></div>
<div class="c" style="left:259px;top:447px;width:93px;height:25px;line-height:25px"><span style="color:#cf1f1f">1-0</span>(0-0)</div>
<div class="c" style="left:353px;top:447px;width:38px;height:25px;line-height:25px">9-6</div>
<div class="c" style="left:392px;top:447px;width:96px;height:25px;line-height:25px">威尔士女足</div>
<div class="c" style="left:489px;top:447px;width:50px;height:25px;line-height:25px">0.96</div>
<div class="c" style="left:540px;top:447px;width:87px;height:25px;line-height:25px">球半</div>
<div class="c" style="left:628px;top:447px;width:53px;height:25px;line-height:25px">0.86</div>
<div class="c" style="left:682px;top:447px;width:63px;height:25px;line-height:25px">1.30</div>
<div class="c" style="left:746px;top:447px;width:63px;height:25px;line-height:25px">5.17</div>
<div class="c" style="left:810px;top:447px;width:79px;height:25px;line-height:25px">7.80</div>
<div class="c" style="left:890px;top:447px;width:38px;height:25px;line-height:25px"><span style="color:#cf1f1f">胜</span></div>
<div class="c" style="left:929px;top:447px;width:39px;height:25px;line-height:25px"><span style="color:#1822c0">输</span></div>
<div class="c" style="left:969px;top:447px;width:59px;height:25px;line-height:25px"><span style="color:#1822c0">小</span></div>
<div class="c" style="left:2px;top:473px;width:80px;height:25px;line-height:25px"><span style="color:#fff">欧女国联</span></div>
<div class="c" style="left:83px;top:473px;width:78px;height:25px;line-height:25px">25-04-09</div>
<div class="c" style="left:162px;top:473px;width:96px;height:25px;line-height:25px"><span style="color:#1c741c">丹麦女足</span></div>
<div class="c" style="left:259px;top:473px;width:93px;height:25px;line-height:25px"><span style="color:#cf1f1f">0-3</span>(0-0)</div>
<div class="c" style="left:353px;top:473px;width:38px;height:25px;line-height:25px">6-3</div>
<div class="c" style="left:392px;top:473px;width:96px;height:25px;line-height:25px">意大利女足</div>
<div class="c" style="left:489px;top:473px;width:50px;height:25px;line-height:25px">1.01</div>
<div class="c" style="left:540px;top:473px;width:87px;height:25px;line-height:25px">半球</div>
<div class="c" style="left:628px;top:473px;width:53px;height:25px;line-height:25px">0.81</div>
<div class="c" style="left:682px;top:473px;width:63px;height:25px;line-height:25px">1.98</div>
<div class="c" style="left:746px;top:473px;width:63px;height:25px;line-height:25px">3.38</div>
<div class="c" style="left:810px;top:473px;width:79px;height:25px;line-height:25px">3.51</div>
<div class="c" style="left:890px;top:473px;width:38px;height:25px;line-height:25px"><span style="color:#1822c0">负</span></div>
<div class="c" style="left:929px;top:473px;width:39px;height:25px;line-height:25px"><span style="color:#1822c0">输</span></div>
<div class="c" style="left:969px;top:473px;width:59px;height:25px;line-height:25px"><span style="color:#cf1f1f">大</span></div>
<div class="c" style="left:2px;top:499px;width:80px;height:25px;line-height:25px"><span style="color:#fff">欧女国联</span></div>
<div class="c" style="left:83px;top:499px;width:78px;height:25px;line-height:25px">25-04-05</div>
<div class="c" style="left:162px;top:499px;width:96px;height:25px;line-height:25px">威尔士女足</div>
<div class="c" style="left:259px;top:499px;width:93px;height:25px;line-height:25px"><span style="color:#cf1f1f">1-2</span>(1-1)</div>
<div class="c" style="left:353px;top:499px;width:38px;height:25px;line-height:25px">3-4</div>
<div class="c" style="left:392px;top:499px;width:96px;height:25px;line-height:25px"><span style="color:#1c741c">丹麦女足</span></div>
<div class="c" style="left:489px;top:499px;width:50px;height:25px;line-height:25px">0.80</div>
<div class="c" style="left:540px;top:499px;width:87px;height:25px;line-height:25px">受一球</div>
<div class="c" style="left:628px;top:499px;width:53px;height:25px;line-height:25px">1.02</div>
<div class="c" style="left:682px;top:499px;width:63px;height:25px;line-height:25px">4.94</div>
<div class="c" style="left:746px;top:499px;width:63px;height:25px;line-height:25px">3.93</div>
<div class="c" style="left:810px;top:499px;width:79px;height:25px;line-height:25px">1.58</div>
<div class="c" style="left:890px;top:499px;width:38px;height:25px;line-height:25px"><span style="color:#cf1f1f">胜</span></div>
<div class="c" style="left:929px;top:499px;width:39px;height:25px;line-height:25px"><span style="color:#1c741c">走</span></div>
<div class="c" style="left:969px;top:499px;width:59px;height:25px;line-height:25px"><span style="color:#cf1f1f">大</span></div>
<div class="c" style="left:2px;top:525px;width:80px;height:25px;line-height:25px"><span style="color:#fff">欧女国联</span></div>
<div class="c" style="left:83px;top:525px;width:78px;height:25px;line-height:25px">25-02-26</div>
<div class="c" style="left:162px;top:525px;width:96px;height:25px;line-height:25px">意大利女足</div>
<div class="c" style="left:259px;top:525px;width:93px;height:25px;line-height:25px"><span style="color:#cf1f1f">1-3</span>(0-0)</div>
<div class="c" style="left:353px;top:525px;width:38px;height:25px;line-height:25px">4-4</div>
<div class="c" style="left:392px;top:525px;width:96px;height:25px;line-height:25px"><span style="color:#1c741c">丹麦女足</span></div>
<div class="c" style="left:489px;top:525px;width:50px;height:25px;line-height:25px">0.97</div>
<div class="c" style="left:540px;top:525px;width:87px;height:25px;line-height:25px">半球</div>
<div class="c" style="left:628px;top:525px;width:53px;height:25px;line-height:25px">0.85</div>
<div class="c" style="left:682px;top:525px;width:63px;height:25px;line-height:25px">1.99</div>
<div class="c" style="left:746px;top:525px;width:63px;height:25px;line-height:25px">3.38</div>
<div class="c" style="left:810px;top:525px;width:79px;height:25px;line-height:25px">3.40</div>
<div class="c" style="left:890px;top:525px;width:38px;height:25px;line-height:25px"><span style="color:#cf1f1f">胜</span></div>
<div class="c" style="left:929px;top:525px;width:39px;height:25px;line-height:25px"><span style="color:#cf1f1f">赢</span></div>
<div class="c" style="left:969px;top:525px;width:59px;height:25px;line-height:25px"><span style="color:#cf1f1f">大</span></div>
<div class="c" style="left:2px;top:551px;width:80px;height:25px;line-height:25px"><span style="color:#fff">欧女国联</span></div>
<div class="c" style="left:83px;top:551px;width:78px;height:25px;line-height:25px">25-02-22</div>
<div class="c" style="left:162px;top:551px;width:96px;height:25px;line-height:25px"><span style="color:#1c741c">丹麦女足</span></div>
<div class="c" style="left:259px;top:551px;width:93px;height:25px;line-height:25px"><span style="color:#cf1f1f">1-2</span>(1-1)</div>
<div class="c" style="left:353px;top:551px;width:38px;height:25px;line-height:25px">1-5</div>
<div class="c" style="left:392px;top:551px;width:96px;height:25px;line-height:25px">瑞典女足</div>
<div class="c" style="left:489px;top:551px;width:50px;height:25px;line-height:25px">0.90</div>
<div class="c" style="left:540px;top:551px;width:87px;height:25px;line-height:25px">受平/半</div>
<div class="c" style="left:628px;top:551px;width:53px;height:25px;line-height:25px">0.92</div>
<div class="c" style="left:682px;top:551px;width:63px;height:25px;line-height:25px">3.01</div>
<div class="c" style="left:746px;top:551px;width:63px;height:25px;line-height:25px">3.37</div>
<div class="c" style="left:810px;top:551px;width:79px;height:25px;line-height:25px">2.15</div>
<div class="c" style="left:890px;top:551px;width:38px;height:25px;line-height:25px"><span style="color:#1822c0">负</span></div>
<div class="c" style="left:929px;top:551px;width:39px;height:25px;line-height:25px"><span style="color:#1822c0">输</span></div>
<div class="c" style="left:969px;top:551px;width:59px;height:25px;line-height:25px"><span style="color:#cf1f1f">大</span></div>
<div class="c" style="left:2px;top:577px;width:80px;height:25px;line-height:25px"><span style="color:#fff">国际友谊</span></div>
<div class="c" style="left:83px;top:577px;width:78px;height:25px;line-height:25px">24-12-03</div>
<div class="c" style="left:162px;top:577px;width:96px;height:25px;line-height:25px"><span style="color:#1c741c">丹麦女足</span></div>
<div class="c" style="left:259px;top:577px;width:93px;height:25px;line-height:25px"><span style="color:#cf1f1f">2-0</span>(2-0)</div>
<div class="c" style="left:353px;top:577px;width:38px;height:25px;line-height:25px">3-5</div>
<div class="c" style="left:392px;top:577px;width:96px;height:25px;line-height:25px">冰岛女足</div>
<div class="c" style="left:489px;top:577px;width:50px;height:25px;line-height:25px">0.70</div>
<div class="c" style="left:540px;top:577px;width:87px;height:25px;line-height:25px">平/半</div>
<div class="c" style="left:628px;top:577px;width:53px;height:25px;line-height:25px">1.13</div>
<div class="c" style="left:682px;top:577px;width:63px;height:25px;line-height:25px">1.96</div>
<div class="c" style="left:746px;top:577px;width:63px;height:25px;line-height:25px">3.27</div>
<div class="c" style="left:810px;top:577px;width:79px;height:25px;line-height:25px">3.52</div>
<div class="c" style="left:890px;top:577px;width:38px;height:25px;line-height:25px"><span style="color:#cf1f1f">胜</span></div>
<div class="c" style="left:929px;top:577px;width:39px;height:25px;line-height:25px"><span style="color:#cf1f1f">赢</span></div>
<div class="c" style="left:969px;top:577px;width:59px;height:25px;line-height:25px"><span style="color:#1822c0">小</span></div>
<div class="c" style="left:2px;top:603px;width:80px;height:25px;line-height:25px"><span style="color:#fff">国际友谊</span></div>
<div class="c" style="left:83px;top:603px;width:78px;height:25px;line-height:25px">24-10-30</div>
<div class="c" style="left:162px;top:603px;width:96px;height:25px;line-height:25px"><span style="color:#1c741c">丹麦女足</span></div>
<div class="c" style="left:259px;top:603px;width:93px;height:25px;line-height:25px"><span style="color:#cf1f1f">1-2</span>(0-2)</div>
<div class="c" style="left:353px;top:603px;width:38px;height:25px;line-height:25px">1-2</div>
<div class="c" style="left:392px;top:603px;width:96px;height:25px;line-height:25px">荷兰女足</div>
<div class="c" style="left:489px;top:603px;width:50px;height:25px;line-height:25px">1.01</div>
<div class="c" style="left:540px;top:603px;width:87px;height:25px;line-height:25px">平手</div>
<div class="c" style="left:628px;top:603px;width:53px;height:25px;line-height:25px">0.81</div>
<div class="c" style="left:682px;top:603px;width:63px;height:25px;line-height:25px">2.68</div>
<div class="c" style="left:746px;top:603px;width:63px;height:25px;line-height:25px">3.45</div>
<div class="c" style="left:810px;top:603px;width:79px;height:25px;line-height:25px">2.30</div>
<div class="c" style="left:890px;top:603px;width:38px;height:25px;line-height:25px"><span style="color:#1822c0">负</span></div>
<div class="c" style="left:929px;top:603px;width:39px;height:25px;line-height:25px"><span style="color:#1822c0">输</span></div>
<div class="c" style="left:969px;top:603px;width:59px;height:25px;line-height:25px"><span style="color:#cf1f1f">大</span></div>
<div class="c" style="left:2px;top:629px;width:80px;height:25px;line-height:25px"><span style="color:#fff">国际友谊</span></div>
<div class="c" style="left:83px;top:629px;width:78px;height:25px;line-height:25px">24-10-26</div>
<div class="c" style="left:162px;top:629px;width:96px;height:25px;line-height:25px"><span style="color:#1c741c">丹麦女足</span></div>
<div class="c" style="left:259px;top:629px;width:93px;height:25px;line-height:25px"><span style="color:#cf1f1f">5-0</span>(0-0)</div>
<div class="c" style="left:353px;top:629px;width:38px;height:25px;line-height:25px">9-2</div>
<div class="c" style="left:392px;top:629px;width:96px;height:25px;line-height:25px">南非女足</div>
<div class="c" style="left:489px;top:629px;width:50px;height:25px;line-height:25px">0.85</div>
<div class="c" style="left:540px;top:629px;width:87px;height:25px;line-height:25px">两球</div>
<div class="c" style="left:628px;top:629px;width:53px;height:25px;line-height:25px">0.97</div>
<div class="c" style="left:682px;top:629px;width:63px;height:25px;line-height:25px">1.15</div>
<div class="c" style="left:746px;top:629px;width:63px;height:25px;line-height:25px">6.49</div>
<div class="c" style="left:810px;top:629px;width:79px;height:25px;line-height:25px">13.73</div>
<div class="c" style="left:890px;top:629px;width:38px;height:25px;line-height:25px"><span style="color:#cf1f1f">胜</span></div>
<div class="c" style="left:929px;top:629px;width:39px;height:25px;line-height:25px"><span style="color:#cf1f1f">赢</span></div>
<div class="c" style="left:969px;top:629px;width:59px;height:25px;line-height:25px"><span style="color:#cf1f1f">大</span></div>
<div class="c" style="left:2px;top:655px;width:80px;height:25px;line-height:25px"><span style="color:#fff">女欧国杯外</span></div>
<div class="c" style="left:83px;top:655px;width:78px;height:25px;line-height:25px">24-07-17</div>
<div class="c" style="left:162px;top:655px;width:96px;height:25px;line-height:25px"><span style="color:#1c741c">丹麦女足</span></div>
<div class="c" style="left:259px;top:655px;width:93px;height:25px;line-height:25px"><span style="color:#cf1f1f">2-0</span>(0-0)</div>
<div class="c" style="left:353px;top:655px;width:38px;height:25px;line-height:25px">5-6</div>
<div class="c" style="left:392px;top:655px;width:96px;height:25px;line-height:25px">捷克女足</div>
<div class="c" style="left:489px;top:655px;width:50px;height:25px;line-height:25px">0.80</div>
<div class="c" style="left:540px;top:655px;width:87px;height:25px;line-height:25px">一/球半</div>
<div class="c" style="left:628px;top:655px;width:53px;height:25px;line-height:25px">1.02</div>
<div class="c" style="left:682px;top:655px;width:63px;height:25px;line-height:25px">1.34</div>
<div class="c" style="left:746px;top:655px;width:63px;height:25px;line-height:25px">4.83</div>
<div class="c" style="left:810px;top:655px;width:79px;height:25px;line-height:25px">7.36</div>
<div class="c" style="left:890px;top:655px;width:38px;height:25px;line-height:25px"><span style="color:#cf1f1f">胜</span></div>
<div class="c" style="left:929px;top:655px;width:39px;height:25px;line-height:25px"><span style="color:#cf1f1f">赢</span></div>
<div class="c" style="left:969px;top:655px;width:59px;height:25px;line-height:25px"><span style="color:#1822c0">小</span></div>
<div class="c" style="left:2px;top:681px;width:80px;height:25px;line-height:25px"><span style="color:#fff">女欧国杯外</span></div>
<div class="c" style="left:83px;top:681px;width:78px;height:25px;line-height:25px">24-07-13</div>
<div class="c" style="left:162px;top:681px;width:96px;height:25px;line-height:25px">比利时女足</div>
<div class="c" style="left:259px;top:681px;width:93px;height:25px;line-height:25px"><span style="color:#cf1f1f">0-3</span>(0-0)</div>
<div class="c" style="left:353px;top:681px;width:38px;height:25px;line-height:25px">3-8</div>
<div class="c" style="left:392px;top:681px;width:96px;height:25px;line-height:25px"><span style="color:#1c741c">丹麦女足</span></div>
<div class="c" style="left:489px;top:681px;width:50px;height:25px;line-height:25px">1.14</div>
<div class="c" style="left:540px;top:681px;width:87px;height:25px;line-height:25px">受半/一</div>
<div class="c" style="left:628px;top:681px;width:53px;height:25px;line-height:25px">0.69</div>
<div class="c" style="left:682px;top:681px;width:63px;height:25px;line-height:25px">4.49</div>
<div class="c" style="left:746px;top:681px;width:63px;height:25px;line-height:25px">3.97</div>
<div class="c" style="left:810px;top:681px;width:79px;height:25px;line-height:25px">1.62</div>
<div class="c" style="left:890px;top:681px;width:38px;height:25px;line-height:25px"><span style="color:#cf1f1f">胜</span></div>
<div class="c" style="left:929px;top:681px;width:39px;height:25px;line-height:25px"><span style="color:#cf1f1f">赢</span></div>
<div class="c" style="left:969px;top:681px;width:59px;height:25px;line-height:25px"><span style="color:#cf1f1f">大</span></div>
<div class="c" style="left:2px;top:706px;width:1026px;height:25px;line-height:25px;letter-spacing:0.2px">近<span style="color:#cf1f1f">10</span>场,胜7平0负3, 胜率:<span style="color:#cf1f1f">70%</span> 让胜率:<span style="color:#cf1f1f">50%</span> 大率:<span style="color:#cf1f1f">70%</span> 单率:<span style="color:#cf1f1f">70%</span></div>
<div class="t" style="left:362px;top:388px;font-size:12px;color:#333;line-height:16px">近</div>
<div class="sel r" style="left:377px;top:387px;width:36px;height:15px;font-size:13.333px;line-height:15px"><span class="st" style="font-family:Liberation Serif,serif;font-size:13px;left:5px;top:-1px;letter-spacing:0.5px">10</span><svg class="chev" width="11" height="7" viewBox="0 0 11 7"><path d="M1.2 1.3 L5.5 5.4 L9.8 1.3" fill="none" stroke="#000" stroke-width="2.1"/></svg></div>
<div class="t" style="left:419px;top:388px;font-size:12px;color:#333;line-height:16px">场</div>
<div style="left:434px;top:387px;width:13px;height:13px"><svg width="13" height="13" viewBox="0 0 13 13"><rect x="0.5" y="0.5" width="12" height="12" rx="2" fill="#fff" stroke="#767676" stroke-width="1"/></svg></div>
<div class="t" style="left:452px;top:388px;font-size:12px;color:#333;line-height:16px">同客</div>
<div style="left:480px;top:387px;width:13px;height:13px"><svg width="13" height="13" viewBox="0 0 13 13"><rect x="0" y="0" width="13" height="13" rx="2" fill="#0075ff"/><path d="M2.8 6.6 L5.3 9.1 L10.2 3.6" fill="none" stroke="#fff" stroke-width="1.9"/></svg></div>
<div class="t" style="left:493px;top:388px;font-size:12px;color:#333;line-height:16px">欧女国联</div>
<div style="left:541px;top:387px;width:13px;height:13px"><svg width="13" height="13" viewBox="0 0 13 13"><rect x="0" y="0" width="13" height="13" rx="2" fill="#0075ff"/><path d="M2.8 6.6 L5.3 9.1 L10.2 3.6" fill="none" stroke="#fff" stroke-width="1.9"/></svg></div>
<div class="t" style="left:554px;top:388px;font-size:12px;color:#333;line-height:16px">国际友谊</div>
<div style="left:602px;top:387px;width:13px;height:13px"><svg width="13" height="13" viewBox="0 0 13 13"><rect x="0" y="0" width="13" height="13" rx="2" fill="#0075ff"/><path d="M2.8 6.6 L5.3 9.1 L10.2 3.6" fill="none" stroke="#fff" stroke-width="1.9"/></svg></div>
<div class="t" style="left:615px;top:388px;font-size:12px;color:#333;line-height:16px">女欧国杯外</div>
<div style="left:675px;top:387px;width:13px;height:13px"><svg width="13" height="13" viewBox="0 0 13 13"><rect x="0" y="0" width="13" height="13" rx="2" fill="#0075ff"/><path d="M2.8 6.6 L5.3 9.1 L10.2 3.6" fill="none" stroke="#fff" stroke-width="1.9"/></svg></div>
<div class="t" style="left:688px;top:388px;font-size:12px;color:#333;line-height:16px">女世界杯</div>
</body></html>
